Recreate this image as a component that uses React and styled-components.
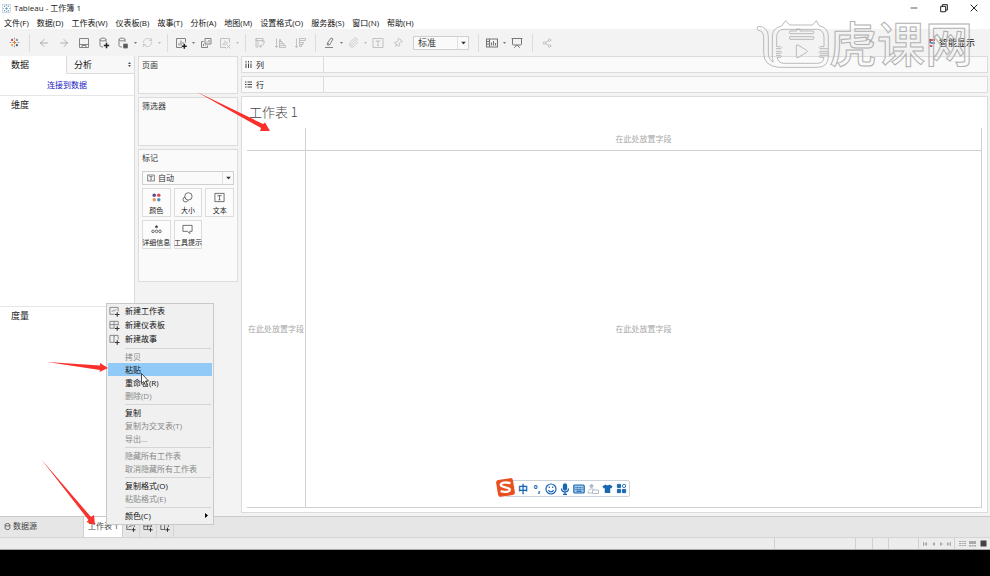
import React, { useState } from 'react';
import styled, { createGlobalStyle, css } from 'styled-components';
import { ArrowLeft, ArrowRight, RefreshCw, Share2, Pin, Paperclip, Presentation } from 'lucide-react';

const GlobalStyle = createGlobalStyle`
  * {
    box-sizing: border-box;
  }
  body {
    margin: 0;
    background: #000;
  }
  button, select, input {
    font: inherit;
    color: inherit;
    margin: 0;
    padding: 0;
    border: 0;
    background: none;
  }
  h1, h2, p {
    margin: 0;
    font-weight: 400;
  }
  svg {
    display: block;
    flex: none;
  }
`

const Screen = styled.div`
  position: relative;
  display: flex;
  flex-direction: column;
  min-height: 100vh;
  padding-bottom: 26px;
  overflow: hidden;
  background: #000;
  color: #222;
  font-family: 'Open Sans', 'Noto Sans CJK SC', sans-serif;
  font-size: 8px;
  line-height: 12px;
`

const TitleBar = styled.header`
  display: flex;
  align-items: center;
  gap: 3px;
  height: 16px;
  padding: 0 11px 0 2px;
  background: #fff;
`

const WindowTitle = styled.h1`
  flex: 1;
  font-size: 8px;
`

const WindowButtons = styled.div`
  display: flex;
  gap: 20px;
`

const MenuBar = styled.nav`
  display: flex;
  gap: 8px;
  height: 13px;
  padding-left: 4px;
  background: #fff;
  color: #111;
`

const Toolbar = styled.div`
  display: flex;
  align-items: center;
  height: 27px;
  padding: 0 15px 0 4px;
  background: #f3f3f3;
`

const ToolButton = styled.button`
  display: flex;
  align-items: center;
  justify-content: center;
  width: ${props => props.$split ? '18px' : '20px'};
  height: 20px;
  color: ${props => props.$dim ? '#bbb' : '#777'};
`

const CaretButton = styled(ToolButton)`
  width: 6px;
`

const ToolDivider = styled.span`
  width: 1px;
  height: 18px;
  margin: 0 4px 0 5px;
  background: #dcdcdc;
`

const ShowMe = styled.button`
  display: flex;
  align-items: center;
  gap: 2px;
  margin-left: auto;
  color: #222;
  font-size: 9px;
`

const SelectBox = styled.label`
  position: relative;
  display: block;
  color: #333;
  svg {
    position: absolute;
    pointer-events: none;
  }
  .caret {
    right: 3px;
    top: 50%;
    transform: translateY(-50%);
  }
  .lead {
    left: 5px;
    top: 3px;
  }
  select {
    display: block;
    width: 100%;
    height: 14px;
    padding-left: ${props => props.$lead ? '15px' : '4px'};
    appearance: none;
    border: 1px solid #d0d0d0;
    background: #fafafa;
    line-height: 12px;
  }
  &::after {
    content: '';
    position: absolute;
    right: 11px;
    top: 1px;
    bottom: 1px;
    border-left: 1px solid #e2e2e2;
  }
`

const FitSelect = styled(SelectBox)`
  width: 56px;
  margin: 0 4px 0 5px;
  font-size: 9px;
`

const Body = styled.main`
  display: flex;
  flex: 1;
  min-height: 440px;
  background: #f3f3f3;
`

const DataPane = styled.aside`
  display: flex;
  flex-direction: column;
  width: 135px;
  border-right: 1px solid #dcdcdc;
  background: #fff;
`

const PaneTabs = styled.div`
  display: flex;
  height: 18px;
`

const PaneTab = styled.button`
  display: flex;
  align-items: center;
  justify-content: space-between;
  width: ${props => props.$active ? '66px' : '68px'};
  padding: 0 3px 0 ${props => props.$active ? '11px' : '7px'};
  font-size: 9px;
  color: #111;
  ${props => !props.$active && css`
    border: solid #dcdcdc;
    border-width: 0 0 1px 1px;
    background: #f8f8f8;
  `}
`

const ConnectRow = styled.div`
  height: 21px;
  padding-top: 5px;
  text-align: center;
  a {
    color: #1a1abf;
    text-decoration: none;
  }
`

const FieldSection = styled.section`
  flex: 1;
  padding: 3px 11px;
  border-top: 1px solid #e6e6e6;
  h2 {
    font-size: 9px;
  }
`

const ShelfColumn = styled.div`
  display: flex;
  flex-direction: column;
  gap: 3px;
  width: 100px;
  margin: 0 3px;
`

const Card = styled.section`
  min-height: ${props => props.$height};
  padding: 2px 3px;
  border: 1px solid #dcdcdc;
  background: #fafafa;
  h2 {
    font-size: 8px;
    color: #333;
  }
`

const MarkGrid = styled.div`
  display: grid;
  grid-template-columns: repeat(3, minmax(0, 1fr));
  gap: 3px;
  margin-top: 3px;
`

const MarkButton = styled.button`
  display: flex;
  flex-direction: column;
  align-items: center;
  justify-content: flex-end;
  gap: 2px;
  height: 29px;
  border: 1px solid #dcdcdc;
  background: #fcfcfc;
  font-size: 7px;
  line-height: 11px;
  white-space: nowrap;
  color: #222;
  svg {
    color: #555;
  }
`

const MarksCard = styled(Card)`
  h2 {
    margin-bottom: 7px;
  }
`

const View = styled.div`
  display: flex;
  flex-direction: column;
  flex: 1;
  gap: 3px;
  padding: 0 2px 3px 0;
`

const Shelf = styled.div`
  display: flex;
  height: 17px;
  border: 1px solid #dcdcdc;
  background: #fafafa;
`

const ShelfLabel = styled.div`
  display: flex;
  align-items: center;
  gap: 4px;
  width: 82px;
  padding-left: 3px;
  border-right: 1px solid #dcdcdc;
`

const Sheet = styled.section`
  display: flex;
  flex-direction: column;
  flex: 1;
  padding: 4px 5px;
  border: 1px solid #dcdcdc;
  background: #fff;
`

const SheetTitle = styled.h2`
  padding: 0 2px 5px;
  font-size: 13px;
  font-weight: 300;
  line-height: 22px;
  color: #444;
  font-family: 'Noto Sans CJK SC', sans-serif;
`

const DropGrid = styled.div`
  display: grid;
  flex: 1;
  grid-template-columns: 59px 1fr;
  grid-template-rows: 23px 1fr;
  border: solid #d0d0d0;
  border-width: 0 1px 1px 0;
`

const DropZone = styled.div`
  display: flex;
  align-items: center;
  justify-content: center;
  white-space: nowrap;
  color: #a8a8a8;
  border: solid #d0d0d0;
  border-width: 0 ${props => props.$right ? '1px' : 0} ${props => props.$bottom ? '1px' : 0} 0;
`

const SheetTabs = styled.div`
  display: flex;
  height: 21px;
  border-top: 1px solid #cacaca;
  background: #e6e6e6;
  color: #444;
`

const SheetTab = styled.button`
  display: flex;
  align-items: center;
  gap: 2px;
  width: ${props => props.$source ? '84px' : '39px'};
  padding: 0 0 2px 4px;
  white-space: nowrap;
  border-right: 1px solid #d0d0d0;
  background: ${props => props.$active ? '#fff' : 'none'};
`

const AddTab = styled.button`
  display: flex;
  align-items: center;
  justify-content: center;
  width: 17px;
  border-right: 1px solid #d4d4d4;
`

const StatusBar = styled.footer`
  display: flex;
  justify-content: flex-end;
  height: 13px;
  border-top: 1px solid #d4d4d4;
  border-bottom: 1px solid #aaa;
  background: #ececec;
  color: #aaa;
`

const StatusCell = styled.div`
  display: flex;
  align-items: center;
  justify-content: space-evenly;
  width: ${props => props.$width};
  border-left: 1px solid #d0d0d0;
`

const ContextMenu = styled.div`
  position: absolute;
  left: 106px;
  top: 303px;
  width: 108px;
  padding: 0 1px 2px;
  border: 1px solid #c8c8c8;
  background: #f0f0f0;
`

const MenuItem = styled.button`
  display: flex;
  align-items: center;
  width: 100%;
  height: ${props => props.$tall ? '14px' : '13px'};
  color: ${props => props.disabled ? '#888' : '#111'};
  background: ${props => props.$selected ? '#91c9f7' : 'none'};
  white-space: nowrap;
  .arrow {
    margin: 0 4px 0 auto;
  }
`

const MenuGutter = styled.span`
  width: 17px;
  padding-left: 1px;
  color: #777;
`

const MenuRule = styled.hr`
  height: 1px;
  margin: 2px 1px 1px 17px;
  border: 0;
  background: #d4d4d4;
`

const InputBar = styled.div`
  position: absolute;
  left: 505px;
  top: 480px;
  display: flex;
  align-items: center;
  gap: 2px;
  height: 17px;
  padding: 0 2px 0 11px;
  border: 1px solid #ccd3da;
  border-radius: 2px;
  background: #fff;
  color: #1767b3;
  font-size: 10px;
  font-weight: 700;
`

const InputButton = styled.button`
  display: flex;
  align-items: center;
  justify-content: center;
  width: 12px;
  height: 14px;
`

const InputLogo = styled.svg`
  position: absolute;
  left: -11px;
  top: -4px;
`

const Annotations = styled.svg`
  position: absolute;
  left: 0;
  top: 0;
  pointer-events: none;
`

const Watermark = styled.div`
  position: absolute;
  right: 17px;
  top: 18px;
  display: flex;
  pointer-events: none;
  font-family: 'Noto Sans CJK SC', sans-serif;
  font-size: 48px;
  font-weight: 500;
  line-height: 46px;
  color: transparent;
  -webkit-text-stroke: 1px #b0b0b0;
`

const Icon = ({ size = 12, children, ...rest }) => (
  <svg width={size} height={size} viewBox="0 0 12 12" fill="none" stroke="currentColor" strokeWidth="0.9" {...rest}>
    {children}
  </svg>
)

const Caret = props => (
  <svg width="5" height="3" viewBox="0 0 5 3" fill="currentColor" {...props}><path d="M0 0h5L2.5 3z" /></svg>
)

const SmallCaret = () => <svg width="3" height="2" viewBox="0 0 3 2" fill="currentColor"><path d="M0 0h3L1.5 2z" /></svg>

const TableauMark = () => (
  <Icon size={11} strokeWidth="1.1">
    <path d="M6 4v4M4 6h4" stroke="#e8762c" />
    <path d="M3.4 2v2.4M2.2 3.2h2.4" stroke="#c72035" />
    <path d="M8.6 2v2.4M7.4 3.2h2.4" stroke="#5b879b" />
    <path d="M3.4 7.6V10M2.2 8.8h2.4" stroke="#eb9129" />
    <path d="M8.6 7.6V10M7.4 8.8h2.4" stroke="#1f447e" />
    <path d="M6 .8v1.6M6 9.6v1.6M.8 6h1.6M9.6 6h1.6" stroke="#7199a6" />
  </Icon>
)

const AppMark = () => (
  <Icon size={9} stroke="#5d93ad">
    <rect x=".5" y=".5" width="11" height="11" stroke="#b9cdd8" />
    <path d="M6 4v4M4 6h4M3.5 2v2M2.5 3h2M8.5 2v2M7.5 3h2M3.5 8v2M2.5 9h2M8.5 8v2M7.5 9h2M6 1v1.5M6 9.5V11M1 6h1.5M9.5 6H11" />
  </Icon>
)

const SaveIcon = () => <Icon><path d="M1.5 1.5h9v9h-9zM1.5 7.5h9M4 10.500V8.500h4v2" /></Icon>

const SourceIcon = ({ plus }) => (
  <Icon>
    <path d="M2 2.500v6c0 1 1.500 1.500 3 1.500M2 2.500C2 .6 8 .6 8 2.500S2 4.400 2 2.500M8 2.500V5" />
    {plus ? <path d="M8.500 5.800v5.400M5.800 8.500h5.400" stroke="#222" strokeWidth="1.500" /> : <path d="M6.500 7h4v4h-4z" fill="#555" />}
  </Icon>
)

const NewSheetIcon = ({ clear }) => (
  <Icon>
    <path d="M10.500 5.500v-4h-9v9H7M4 8.500V6M6 8.500v-5M8 7V5" />
    {clear ? <path d="M7.500 7.500l4 4M11.500 7.500l-4 4" /> : <path d="M9.300 6.800v5M6.800 9.300h5" stroke="#222" strokeWidth="1.500" />}
  </Icon>
)

const DuplicateIcon = () => <Icon><path d="M5 1.500h6V7H5zM3.500 4.500H1.500v6h6V8.500M7 5.500v-1M9 5.500V3M3.500 9V7M5.500 9v-.5" /></Icon>
const SwapIcon = () => <Icon><path d="M2 1.500h7v2H2zM2 1.500v8.500h2V3.500M9 3.500c1.500 1.500 1.500 5-3 6M7.500 7.500L5.500 9.300l2 1.500M7.500 5L9.200 3.500 11 5" /></Icon>
const SortIcon = ({ down }) => (
  <Icon>
    <path d="M2.500 1.500v9M1 9l1.500 1.500L4 9" />
    {down ? <path d="M5.500 1.500h6v2h-6zM5.500 5.500H10M5.500 7.500H9v-2M5.500 9.500h2v-2M5.500 1.500v8" /> : <path d="M5.500 10.500h6v-2h-6zM5.500 6.500H10v2M5.500 4.500H8v2M5.500 2.500h1v2M5.500 2.500v8" />}
  </Icon>
)
const HighlightIcon = () => <Icon><path d="M8 1l2 1-3.500 6H4.200L4.500 6zM4.500 6l2 1.500M2 10.500h8" /></Icon>
const TextIcon = props => <Icon {...props}><path d="M1 1.500h10v9H1zM4 4.500V4h4v.5M6 4v4.500M5 8.500h2" /></Icon>
const CardsIcon = () => <Icon><path d="M.5 2h11v8H.5zM3.500 2v8M.5 4.500h3M.5 7h3M5.500 8.500v-3M7.500 8.500V4M9.500 8.500V6" strokeWidth="1.100" /></Icon>

const ShowMeIcon = () => (
  <Icon size={8} strokeWidth="2.400">
    <path d="M1.500 0v6" stroke="#3c5a8c" /><path d="M1 1.500h8" stroke="#c0394b" /><path d="M2 6h7" stroke="#4a7fb5" /><path d="M1 10.500h4" stroke="#c0394b" />
  </Icon>
)

const AddTabIcon = ({ kind, size = 10 }) => (
  <Icon size={size}>
    <path d="M10 6V1.500H1V9h5" />
    {kind === 'sheet' && <path d="M3 6.500l2-2 1 1 2-2" />}
    {kind === 'dashboard' && <path d="M5.500 1.500V9M1 5h9" />}
    {kind === 'story' && <path d="M5.500 1.500V9M5.500 3L7 1.500" />}
    <path d="M9 6.800v5M6.500 9.300h5" stroke="#333" strokeWidth="1.200" />
  </Icon>
)

const marks = [
  { label: '颜色', icon: <Icon size={11} stroke="none"><circle cx="3.500" cy="3.500" r="1.900" fill="#5a4a8c" /><circle cx="8.500" cy="3.500" r="1.900" fill="#e0485c" /><circle cx="3.500" cy="8.500" r="1.900" fill="#ee9250" /><circle cx="8.500" cy="8.500" r="1.900" fill="#4b8fc4" /></Icon> },
  { label: '大小', icon: <Icon size={11}><circle cx="7" cy="4.800" r="4" /><path d="M3.600 5.500a2.700 2.700 0 1 0 2.900 3.300" /></Icon> },
  { label: '文本', icon: <TextIcon size={11} /> },
  { label: '详细信息', icon: <Icon size={11}><circle cx="6" cy="3" r="1.200" fill="#444" /><circle cx="2.200" cy="8" r="1.400" /><circle cx="6" cy="8" r="1.400" /><circle cx="9.800" cy="8" r="1.400" /></Icon> },
  { label: '工具提示', icon: <Icon size={11}><path d="M1 1.500h10v6.500H8.500v2.500L6 8H1z" /></Icon> },
]

const menuItems = [
  { label: '新建工作表', icon: 'sheet' },
  { label: '新建仪表板', icon: 'dashboard' },
  { label: '新建故事', icon: 'story' },
  null,
  { label: '拷贝', disabled: true },
  { label: '粘贴', selected: true },
  { label: '重命名(R)' },
  { label: '删除(D)', disabled: true },
  null,
  { label: '复制' },
  { label: '复制为交叉表(T)', disabled: true },
  { label: '导出...', disabled: true },
  null,
  { label: '隐藏所有工作表', disabled: true },
  { label: '取消隐藏所有工作表', disabled: true },
  null,
  { label: '复制格式(O)' },
  { label: '粘贴格式(E)', disabled: true },
  null,
  { label: '颜色(C)', submenu: true },
]

const topMenus = ['文件(F)', '数据(D)', '工作表(W)', '仪表板(B)', '故事(T)', '分析(A)', '地图(M)', '设置格式(O)', '服务器(S)', '窗口(N)', '帮助(H)']

const Tool = ({ label, dim, split, children }) => (
  <>
    <ToolButton aria-label={label} $dim={dim} $split={split}>{children}</ToolButton>
    {split && <CaretButton aria-label={`${label}选项`} $dim={dim}><SmallCaret /></CaretButton>}
  </>
)

const MainToolbar = ({ fit, onFit }) => (
  <Toolbar>
    <Tool label="起始页"><TableauMark /></Tool>
    <ToolDivider />
    <Tool label="撤消"><ArrowLeft size={12} strokeWidth={1.5} color="#999" /></Tool>
    <Tool label="重做"><ArrowRight size={12} strokeWidth={1.5} color="#999" /></Tool>
    <Tool label="保存"><SaveIcon /></Tool>
    <Tool label="新建数据源"><SourceIcon plus /></Tool>
    <Tool label="暂停更新" split><SourceIcon /></Tool>
    <Tool label="刷新" split dim><RefreshCw size={11} strokeWidth={1.5} /></Tool>
    <ToolDivider />
    <Tool label="新建工作表" split><NewSheetIcon /></Tool>
    <Tool label="复制工作表"><DuplicateIcon /></Tool>
    <Tool label="清除工作表" split dim><NewSheetIcon clear /></Tool>
    <ToolDivider />
    <Tool label="交换行和列" dim><SwapIcon /></Tool>
    <Tool label="升序" dim><SortIcon /></Tool>
    <Tool label="降序" dim><SortIcon down /></Tool>
    <ToolDivider />
    <Tool label="突出显示" split><HighlightIcon /></Tool>
    <Tool label="组" split dim><Paperclip size={11} strokeWidth={1.5} /></Tool>
    <Tool label="标签" dim><TextIcon /></Tool>
    <Tool label="固定" dim><Pin size={10} strokeWidth={2} transform="rotate(35)" /></Tool>
    <FitSelect>
      <select aria-label="适合" value={fit} onChange={e => onFit(e.target.value)}>
        <option>标准</option>
      </select>
      <Caret className="caret" />
    </FitSelect>
    <ToolDivider />
    <Tool label="显示卡" split><CardsIcon /></Tool>
    <Tool label="演示模式"><Presentation size={12} strokeWidth={2} /></Tool>
    <ToolDivider />
    <Tool label="共享" dim><Share2 size={10} strokeWidth={2} /></Tool>
    <ShowMe><ShowMeIcon />智能显示</ShowMe>
  </Toolbar>
)

const TabMenu = () => (
  <ContextMenu>
    {menuItems.map((item, i) => item ? (
      <MenuItem key={item.label} $tall={!!item.icon} $selected={item.selected} disabled={item.disabled}>
        <MenuGutter>{item.icon && <AddTabIcon kind={item.icon} size={11} />}</MenuGutter>
        {item.label}
        {item.submenu && <svg className="arrow" width="3" height="5" viewBox="0 0 3 5"><path d="M0 0l3 2.500L0 5z" /></svg>}
      </MenuItem>
    ) : <MenuRule key={i} />)}
  </ContextMenu>
)

const InputMethod = () => (
  <InputBar>
    <InputLogo width="21" height="21" viewBox="0 0 21 21">
      <rect x="2" y="2" width="17" height="17" rx="2.500" fill="#e9501f" transform="rotate(-9 10.500 10.500)" />
      <path d="M15.500 6.300C11 4.800 5.500 5.500 5.800 8.200c.3 2.500 9 1.700 9.100 4.300.1 2.500-5.400 3-9.300 1.700" fill="none" stroke="#fff" strokeWidth="2.300" />
    </InputLogo>
    <InputButton>中</InputButton>
    <InputButton>°,</InputButton>
    <InputButton aria-label="表情"><Icon strokeWidth="1.200"><circle cx="6" cy="6" r="5" /><path d="M3.500 7c1 2.500 4 2.500 5 0M4.300 3.500v1.500M7.700 3.500v1.500" /></Icon></InputButton>
    <InputButton aria-label="语音"><Icon strokeWidth="1.300"><rect x="4.500" y="1" width="3" height="6" rx="1.500" fill="currentColor" /><path d="M2.500 5.500c0 4.500 7 4.500 7 0M6 9v2.500M4 11.300h4" /></Icon></InputButton>
    <InputButton aria-label="软键盘"><Icon strokeWidth="1.200"><rect x=".8" y="2" width="10.400" height="8" rx="1" fill="#a9cbe8" /><path d="M2.500 4.500h7M2.500 6.300h7" strokeDasharray="1 .6" /><path d="M3.500 8.200h5" /></Icon></InputButton>
    <InputButton aria-label="登录"><Icon stroke="#aab4c4"><circle cx="4.500" cy="3" r="1.500" fill="#aab4c4" /><path d="M1 10c0-5 6-5 6-3M1 10h4M5.500 7h6v3.500h-6z" /></Icon></InputButton>
    <InputButton aria-label="皮肤"><Icon size={11} stroke="none" fill="currentColor"><path d="M4 1.500c1 1.300 3 1.300 4 0l3.500 2L10.200 6 9 5.400V11H3V5.400L1.800 6 .5 3.500z" /></Icon></InputButton>
    <InputButton aria-label="工具箱"><Icon size={11} strokeWidth="1"><path d="M1.500 1.500h3.500V5H1.500zM1.500 7h3.500v3.500H1.500zM7 7h3.500v3.500H7z" fill="currentColor" /><circle cx="8.800" cy="3.200" r="1.800" /></Icon></InputButton>
  </InputBar>
)

const StatusStrip = () => (
  <StatusBar>
    <StatusCell $width="81px" />
    <StatusCell $width="17px" />
    <StatusCell $width="16px" />
    <StatusCell $width="30px" />
    <StatusCell $width="36px">
      <svg width="30" height="6" viewBox="0 0 30 6" fill="currentColor">
        <path d="M1 1h1v4H1zM5 1v4L2 3zM13 1v4l-3-2zM18 1v4l3-2zM25 1v4l3-2zM28 1h1v4h-1z" />
      </svg>
    </StatusCell>
    <StatusCell $width="36px">
      <svg width="7" height="7" viewBox="0 0 7 7" stroke="currentColor"><path d="M0 1.500h7M0 3.500h7M0 5.500h7" strokeDasharray="2 .5" /></svg>
      <svg width="7" height="7" viewBox="0 0 7 7" fill="currentColor"><path d="M0 1h7v3H0zM0 5h2v1.500H0zM2.500 5h2v1.500h-2zM5 5h2v1.500H5z" /></svg>
      <svg width="7" height="7" viewBox="0 0 7 7"><path d="M.5.5h6v6h-6z" fill="#444" /></svg>
    </StatusCell>
  </StatusBar>
)

const Brand = () => (
  <Watermark>
    <svg width="73" height="52" viewBox="54 54 219 156" fill="none" stroke="#b0b0b0" strokeWidth="2.600">
      <path d="M60 79Q90 79 91 110V160Q92 180 106 186Q102 178 103 162V108Q104 84 131 78L143 62L155 75H224L235 62L243 77Q270 82 271 108V170Q270 202 238 202H122Q78 198 77 160V110Q76 92 60 91Q54 85 60 79z" />
      <path d="M116 140V112Q116 88 138 88H238Q258 90 258 112V140M258 172Q256 190 238 190H138Q120 189 117 172" />
      <path d="M116 140h12q6 3 0 6h-14M114 154h14q6 3 0 6h-14M117 172h11q6-3 0-6h-14M258 140h-12q-6 3 0 6h24M270 154h-24q-6 3 0 6h24M258 172h-12q-6-3 0-6h24" />
      <path d="M156 93h20v-6h10v6h40q4 4 0 8h-70q-4-4 0-8zM156 110h70q4 4 0 8h-70q-4-4 0-8zM175 138q0-5 5-3l26 16q4 3 0 6l-26 16q-5 2-5-3z" />
    </svg>
    虎课网
  </Watermark>
)

const App = () => {
  const [fit, setFit] = useState('标准')
  const [mark, setMark] = useState('自动')

  return (
    <Screen lang="zh-CN">
      <GlobalStyle />
      <TitleBar>
        <AppMark />
        <WindowTitle>Tableau - 工作簿 1</WindowTitle>
        <WindowButtons>
          <button aria-label="最小化"><Icon size={10}><path d="M2 6h8" stroke="#222" /></Icon></button>
          <button aria-label="还原"><Icon size={10}><path d="M2 4h6v6.500H2zM4 4V2h6v6.500H8" stroke="#222" strokeWidth="1.200" /></Icon></button>
          <button aria-label="关闭"><Icon size={10}><path d="M2 2l8 8M10 2l-8 8" stroke="#222" strokeWidth="1.200" /></Icon></button>
        </WindowButtons>
      </TitleBar>
      <MenuBar>
        {topMenus.map(label => <button key={label}>{label}</button>)}
      </MenuBar>
      <MainToolbar fit={fit} onFit={setFit} />
      <Body>
        <DataPane>
          <PaneTabs>
            <PaneTab $active>数据</PaneTab>
            <PaneTab>分析<svg width="3" height="5" viewBox="0 0 3 5" fill="#555"><path d="M0 2l1.500-2L3 2zM0 3h3L1.500 5z" /></svg></PaneTab>
          </PaneTabs>
          <ConnectRow><a href="#connect">连接到数据</a></ConnectRow>
          <FieldSection><h2>维度</h2></FieldSection>
          <FieldSection><h2>度量</h2></FieldSection>
        </DataPane>
        <ShelfColumn>
          <Card $height="38px"><h2>页面</h2></Card>
          <Card $height="49px"><h2>筛选器</h2></Card>
          <MarksCard $height="133px">
            <h2>标记</h2>
            <SelectBox $lead>
              <TextIcon className="lead" size={8} />
              <select aria-label="标记类型" value={mark} onChange={e => setMark(e.target.value)}>
                <option>自动</option>
              </select>
              <Caret className="caret" />
            </SelectBox>
            <MarkGrid>
              {marks.map(({ label, icon }) => <MarkButton key={label}>{icon}{label}</MarkButton>)}
            </MarkGrid>
          </MarksCard>
        </ShelfColumn>
        <View>
          <Shelf>
            <ShelfLabel>
              <svg width="7" height="7" viewBox="0 0 7 7" stroke="#444"><path d="M1 0v1.500M1 2.500V7M3.500 0v1.500M3.500 2.500V7M6 0v1.500M6 2.500V7" /></svg>
              列
            </ShelfLabel>
          </Shelf>
          <Shelf>
            <ShelfLabel>
              <svg width="7" height="7" viewBox="0 0 7 7" stroke="#444"><path d="M0 1h1.500M2.500 1H7M0 3.500h1.500M2.500 3.500H7M0 6h1.500M2.500 6H7" /></svg>
              行
            </ShelfLabel>
          </Shelf>
          <Sheet>
            <SheetTitle>工作表 1</SheetTitle>
            <DropGrid>
              <DropZone $right $bottom />
              <DropZone $bottom>在此处放置字段</DropZone>
              <DropZone $right>在此处放置字段</DropZone>
              <DropZone>在此处放置字段</DropZone>
            </DropGrid>
          </Sheet>
        </View>
      </Body>
      <SheetTabs>
        <SheetTab $source>
          <Icon size={7}><path d="M2 3v6c0 3 8 3 8 0V3M2 3c0-3 8-3 8 0s-8 3-8 0" strokeWidth="1.300" /></Icon>
          数据源
        </SheetTab>
        <SheetTab $active>工作表 1</SheetTab>
        {['sheet', 'dashboard', 'story'].map(kind => (
          <AddTab key={kind} aria-label={kind}><AddTabIcon kind={kind} /></AddTab>
        ))}
      </SheetTabs>
      <StatusStrip />
      <TabMenu />
      <InputMethod />
      <Annotations width="280" height="530" viewBox="0 0 280 530">
        <g fill="#f9302c">
          <path d="M197 92L263 124L265 122.500L270 131L260 131L261 128z" />
          <path d="M47 362L100 365.500L100 363L108 368L99.500 372L100 370z" />
          <path d="M41 459L91 517L94 515L95 525L86.500 522L88.500 520z" />
        </g>
        <path d="M141.500 373.500v10l2.300-2 1.700 4 1.700-.8-1.700-3.700h3z" fill="#fff" stroke="#222" strokeWidth=".8" />
      </Annotations>
      <Brand />
    </Screen>
  )
}

export default App
